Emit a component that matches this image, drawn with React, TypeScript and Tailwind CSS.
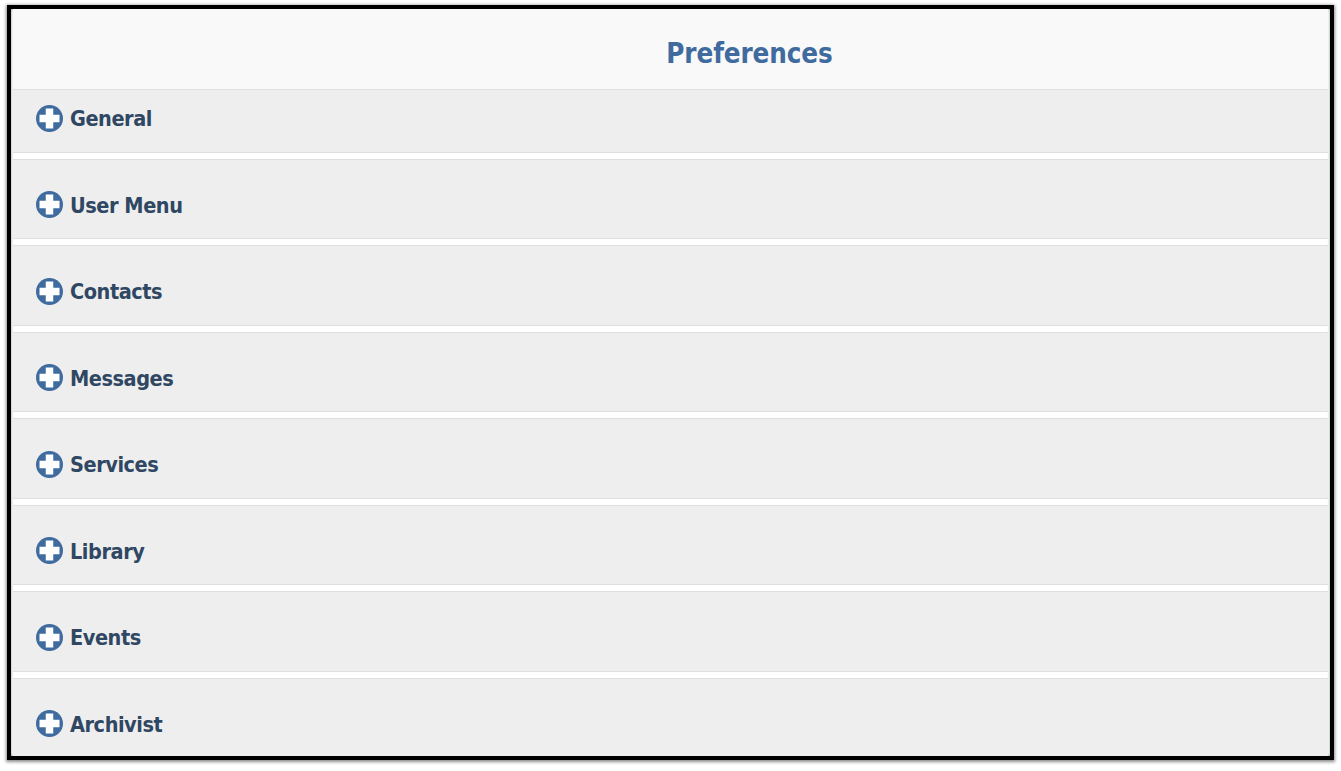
const rows = ["User Menu", "Contacts", "Messages", "Services", "Library", "Events", "Archivist"];

function Plus() {
  return (
    <svg width="27" height="27" viewBox="0 0 27 27" className="mb-[1px] shrink-0">
      <circle cx="13.5" cy="13.5" r="13.5" fill="#3f6b9e" />
      <path d="M9.75 3.5h7.5v6.25h6.25v7.5h-6.25v6.25h-7.5v-6.25H3.5v-7.5h6.25z" fill="#fff" />
    </svg>
  );
}

function Label({ text }: { text: string }) {
  return (
    <div className="flex items-center gap-[7px]">
      <Plus />
      <span className="text-[21.5px] leading-[27px] font-bold tracking-[-0.45px] text-[#2f4763] [font-family:'DejaVu_Sans_Condensed',sans-serif]">{text}</span>
    </div>
  );
}

export default function App() {
  return (
    <div className="h-[771px] w-[1341px] overflow-hidden bg-white pl-[7px] pr-[7px] pt-[5px]">
      <div className="h-[755px] w-[1327px] overflow-hidden border-[4px] border-black bg-white shadow-[0_1px_3px_1px_rgba(0,0,0,0.45)]">
        <div className="h-full px-[2px] shadow-[inset_0_0_3px_rgba(0,0,0,0.45)]">
          <div className="flex h-[80px] items-center justify-center bg-[#f9f9f9] pl-[158px] pt-[9px]">
            <h1 className="text-[27.5px] font-bold tracking-[-0.1px] text-[#3f6b9e] [font-family:'DejaVu_Sans_Condensed',sans-serif]">Preferences</h1>
          </div>
          <div className="flex h-[64px] items-center border-y border-[#e0e0e0] bg-[#eeeeee] pb-[5px] pl-[23px]">
            <Label text="General" />
          </div>
          {rows.map((r) => (
            <div key={r} className="mt-[6px] box-border flex h-[80.45px] items-start border-y border-[#dfdfdf] bg-[#eeeeee] pl-[23px] pt-[31.4px]">
              <Label text={r} />
            </div>
          ))}
        </div>
      </div>
    </div>
  );
}
